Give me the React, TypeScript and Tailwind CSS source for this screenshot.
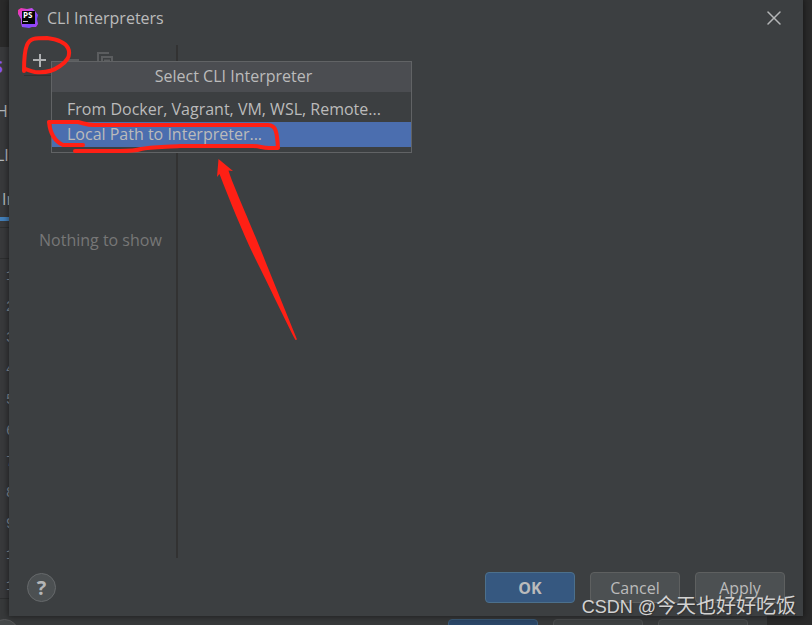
import React from 'react';
import { X } from 'lucide-react';

const gutterLines = ['1', '2', '3', '4', '5', '6', '7', '8', '9', '10', '11'];

export default function App() {
  return (
    <div className="relative h-screen overflow-hidden bg-[#2a2a2a] font-['Open_Sans','Noto_Sans',sans-serif] text-base text-[#bbbbbb]">
      <SettingsWindow />
      <InterpretersDialog />
      <Annotations />
      <p className="absolute right-4 bottom-[3px] font-['Liberation_Sans','Noto_Sans_CJK_SC',sans-serif] text-xl leading-8 whitespace-nowrap text-[#d2d2d2] [text-shadow:1px_1px_1px_#333]">
        <span className="text-lg">CSDN @</span>今天也好好吃饭
      </p>
    </div>
  );
}

const SettingsWindow = () => (
  <div className="absolute top-[47px] right-[45px] bottom-0 left-0 overflow-hidden bg-[#38393b]">
    <div className="flex h-[181px] flex-col border-b border-[#2d2e2f] text-[#b4b8bb]">
      <span className="-ml-1.5 h-11 text-base leading-10 font-bold text-[#8454f5]">S</span>
      <span className="-ml-1 h-11 leading-10">H</span>
      <span className="-ml-1 h-11 leading-10">LI</span>
      <span className="h-9 pl-0.5 leading-10">In</span>
      <div className="mt-0.5 h-1 w-20 bg-[#437fb9]" />
    </div>
    <div className="h-[31px] border-b border-[#2d2e2f]" />
    <ol className="flex h-[340px] flex-col border-b border-[#2d2e2f] pt-0.5 pl-1.5 font-['Liberation_Mono',monospace] text-sm text-[#879099]">
      {gutterLines.map(n => (
        <li key={n} className="h-[31px] shrink-0 leading-[31px]">{n}</li>
      ))}
    </ol>
    <div className="flex h-14 items-start justify-end gap-[15px] bg-[#37393a] pt-5 pr-[19px]">
      <span className="mr-auto -ml-2.5 size-[29px] rounded-full border border-[#58595a] bg-[#454849]" />
      <span className="h-8 w-[90px] rounded border border-[#3b5b78] bg-[#2b4768]" />
      <span className="h-8 w-[90px] rounded border border-[#4c4e4f] bg-[#3e4142]" />
      <span className="h-8 w-[90px] rounded border border-[#4c4e4f] bg-[#3e4142]" />
    </div>
  </div>
);

const InterpretersDialog = () => (
  <section
    aria-label="CLI Interpreters"
    className="absolute top-0 right-[9px] bottom-[9px] left-[9px] flex flex-col bg-[#3c3f41] shadow-[0_0_6px_1px_rgba(0,0,0,0.45)]"
  >
    <header className="flex h-9 items-center pr-[17px] pl-[9px]">
      <AppIcon />
      <h1 className="ml-[9px]">CLI Interpreters</h1>
      <button aria-label="Close" className="ml-auto">
        <X size={24} strokeWidth={1.5} className="text-[#b4b6b7]" />
      </button>
    </header>

    <div className="relative mt-[9px] flex min-h-0 flex-1 pl-[15px]">
      <aside className="flex w-[154px] flex-col border-r-2 border-[#323232]">
        <div className="flex h-[31px] items-center gap-4 border-b border-[#323232] pl-2">
          <button aria-label="Add">
            <svg width="16" height="16" viewBox="0 0 16 16" fill="none" stroke="#afb1b3" strokeWidth="2">
              <path d="M8 2v13M1 8h13" />
            </svg>
          </button>
          <button aria-label="Remove" disabled>
            <svg width="16" height="16" viewBox="0 0 16 16" fill="none" stroke="#5b5d5f" strokeWidth="2">
              <path d="M2 8h13" />
            </svg>
          </button>
          <button aria-label="Copy" disabled>
            <svg width="18" height="18" viewBox="0 0 18 18" fill="none" stroke="#5b5d5f" strokeWidth="2">
              <path d="M2 12V2h11M6 17V6h10v11M8 9.500h6M8 12.500h6" />
            </svg>
          </button>
        </div>
        <p className="pt-[152px] pl-[15px] leading-6 text-[#777777]">Nothing to show</p>
      </aside>
      <InterpreterMenu />
    </div>

    <footer className="flex h-[58px] items-center gap-[15px] pr-[18px] pl-[18px]">
      <button
        aria-label="Help"
        className="mr-auto flex size-[29px] items-center justify-center rounded-full border border-[#66696b] bg-[#4c5052] pt-0.5 text-xl leading-6 font-bold text-[#b4b6b7]"
      >
        ?
      </button>
      <button className="h-[31px] w-[90px] rounded border border-[#4c708c] bg-[#365880] pt-0.5 font-bold">OK</button>
      <button className="h-[31px] w-[90px] rounded border border-[#5e6060] bg-[#4c5052] pt-0.5">Cancel</button>
      <button className="h-[31px] w-[90px] rounded border border-[#5e6060] bg-[#4c5052] pt-0.5">Apply</button>
    </footer>
  </section>
);

const InterpreterMenu = () => (
  <div className="absolute top-4 left-[42px] w-[361px] border border-[#616365] bg-[#3c3f41] leading-[25px]">
    <h2 className="bg-[#4b4d51] pt-0.5 pb-[3px] pl-1 text-center">Select CLI Interpreter</h2>
    <div role="menu" className="flex flex-col py-[5px]">
      <button role="menuitem" className="px-[15px] text-left">From Docker, Vagrant, VM, WSL, Remote...</button>
      <button role="menuitem" className="bg-[#4b6eaf] px-[15px] text-left">Local Path to Interpreter...</button>
    </div>
  </div>
);

const AppIcon = () => (
  <svg width="20" height="20" viewBox="0 0 20 20">
    <defs>
      <linearGradient id="ps" x1="0" y1="0" x2="1" y2="1">
        <stop offset="0" stopColor="#ff2f95" />
        <stop offset="0.35" stopColor="#c44cf0" />
        <stop offset="0.7" stopColor="#7b4cff" />
        <stop offset="1" stopColor="#b83cf0" />
      </linearGradient>
    </defs>
    <path d="M0 2l3-2 6 1 5-1 3 3 3 4-1 4 1 5-2 3-4 0-3 1-7-1-1-4 0-4-3-5z" fill="url(#ps)" />
    <rect x="4" y="3" width="13" height="13" fill="#050505" />
    <text x="5" y="10" fontSize="8" fontWeight="700" fill="#fff">PS</text>
    <path d="M5 13.5h5" stroke="#bbb" />
  </svg>
);

const Annotations = () => (
  <svg
    className="pointer-events-none absolute top-0 left-0"
    width="320"
    height="350"
    viewBox="0 0 320 350"
    fill="none"
    stroke="#ff2015"
    strokeWidth="4"
    strokeLinecap="round"
    strokeLinejoin="round"
  >
    <path d="M24 71C24 62 24 52 27 45C30 38 35 38 47 38C55 39 65 42 68 48C72 56 65 63 60 66C53 71 43 73 35 72C30 71 27 69 24 69" />
    <path d="M83 145H63C54 141 50 132 49 122H78C86 124 88 125 94 125H268C276 125 277 132 278 148H269C262 148 260 146 253 146H180C166 147 150 147 141 149C135 151 130 151 120 151H75" />
    <path
      d="M218.500 159L233 171L228.500 170.500C232 183 250 222 266 263L297 339.500L295.500 340C286 322 268 284 256 260C244 236 230 201 219.500 174L217 177Z"
      fill="#ff2015"
      stroke="none"
    />
  </svg>
);
